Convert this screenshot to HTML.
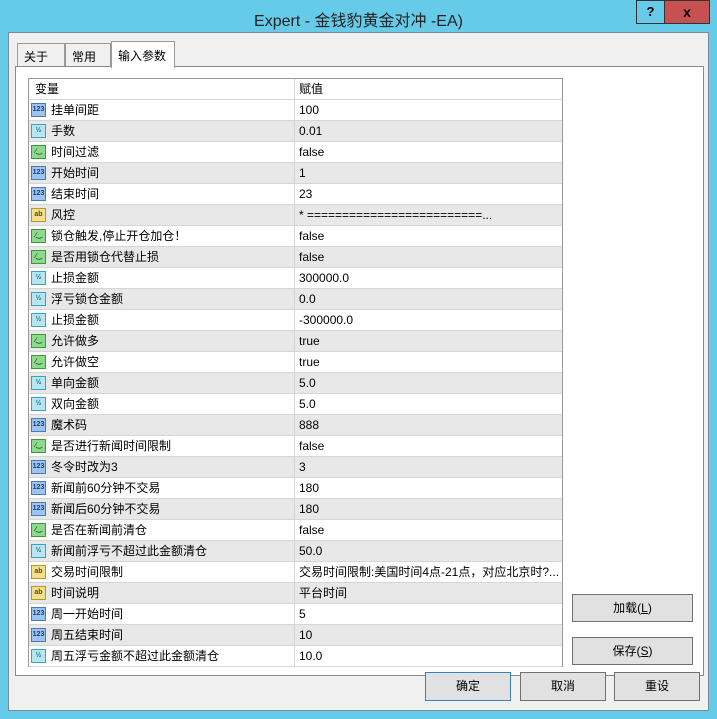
<!DOCTYPE html><html><head><meta charset="utf-8"><style>
*{box-sizing:border-box;margin:0;padding:0}
body{width:717px;height:719px;background:#65cbe9;font-family:"Liberation Sans","Noto Sans CJK SC",sans-serif;font-size:12px;color:#000;position:relative;overflow:hidden}
.abs{position:absolute}
#title{left:0;top:7px;width:717px;text-align:center;font-size:16px;color:#222}
#client{left:8px;top:32px;width:701px;height:679px;background:#f0f0f0;border:1px solid #7a8a99}
.tab{top:43px;height:24px;border:1px solid #999;border-bottom:none;background:#f0f0f0;padding:4px 0 0 6px;font-size:12px}
#panel{left:15px;top:66px;width:689px;height:610px;background:#fff;border:1px solid #8a8a8a}
#list{left:28px;top:78px;width:535px;height:589px;border:1px solid #999;background:#fff}
.row{position:absolute;left:0;width:533px;height:21px;border-bottom:1px solid #d6d6d6;font-size:12px;line-height:20px}
.row.g{background:#e8e8e8}
.n{position:absolute;left:22px;top:0}
.v{position:absolute;left:265px;top:0;border-left:1px solid #d6d6d6;padding-left:4px;height:21px;width:268px;white-space:nowrap;overflow:hidden}
.ic{position:absolute;left:2px;top:3px;width:15px;height:14px;border:1px solid;font-size:7px;line-height:12px;text-align:center;font-weight:bold}
.i{background:#9cc4ec;border-color:#4a78b8;color:#1a3f80}
.d{background:#b8e6f0;border-color:#3aa0c0;color:#1a6f90}
.b{background:#8fd88f;border-color:#3a9a3a;color:#1a5a1a}
.s{background:#f3e08a;border-color:#b09a30;color:#5a4a10}
.btn{position:absolute;background:#e1e1e1;border:1px solid #707070;text-align:center;font-size:12px}
</style></head><body>
<div class="abs" id="title">Expert - 金钱豹黄金对冲 -EA)</div>
<div class="abs" style="left:636px;top:0;width:29px;height:24px;border:1px solid #333;text-align:center;font-weight:bold;font-size:13px;line-height:22px">?</div>
<div class="abs" style="left:664px;top:0;width:46px;height:24px;background:#c75050;border:1px solid #333;text-align:center;font-weight:bold;font-size:14px;line-height:22px">x</div>
<div class="abs" id="client"></div>
<div class="abs tab" style="left:17px;width:48px">关于</div>
<div class="abs tab" style="left:65px;width:46px">常用</div>
<div class="abs" id="panel"></div>
<div class="abs tab" style="left:111px;top:41px;width:64px;height:27px;background:#fff;padding-top:5px">输入参数</div>
<div class="abs" id="list">
<div class="row" style="top:0;background:#fff"><span class="n" style="left:6px">变量</span><span class="v">赋值</span></div>
<div id="rows"></div>
</div>
<div class="btn" style="left:572px;top:594px;width:121px;height:28px;line-height:26px">加载(<u>L</u>)</div>
<div class="btn" style="left:572px;top:637px;width:121px;height:28px;line-height:26px">保存(<u>S</u>)</div>
<div class="btn" style="left:425px;top:672px;width:86px;height:29px;line-height:27px;border-color:#3c7fb1">确定</div>
<div class="btn" style="left:520px;top:672px;width:86px;height:29px;line-height:27px">取消</div>
<div class="btn" style="left:614px;top:672px;width:86px;height:29px;line-height:27px">重设</div>
<script>
var d=[["i","挂单间距","100"],["d","手数","0.01"],["b","时间过滤","false"],["i","开始时间","1"],["i","结束时间","23"],["s","风控","* =========================..."],["b","锁仓触发,停止开仓加仓！","false"],["b","是否用锁仓代替止损","false"],["d","止损金额","300000.0"],["d","浮亏锁仓金额","0.0"],["d","止损金额","-300000.0"],["b","允许做多","true"],["b","允许做空","true"],["d","单向金额","5.0"],["d","双向金额","5.0"],["i","魔术码","888"],["b","是否进行新闻时间限制","false"],["i","冬令时改为3","3"],["i","新闻前60分钟不交易","180"],["i","新闻后60分钟不交易","180"],["b","是否在新闻前清仓","false"],["d","新闻前浮亏不超过此金额清仓","50.0"],["s","交易时间限制","交易时间限制:美国时间4点-21点，对应北京时?..."],["s","时间说明","平台时间"],["i","周一开始时间","5"],["i","周五结束时间","10"],["d","周五浮亏金额不超过此金额清仓","10.0"]];
var t={i:"123",d:"½",b:"∕‿",s:"ab"};var h="";
d.forEach(function(r,k){h+='<div class="row'+(k%2?' g':'')+'" style="top:'+(21+k*21)+'px"><span class="ic '+r[0]+'">'+t[r[0]]+'</span><span class="n">'+r[1]+'</span><span class="v">'+r[2]+'</span></div>';});
document.getElementById("rows").innerHTML=h;
</script>
</body></html>
